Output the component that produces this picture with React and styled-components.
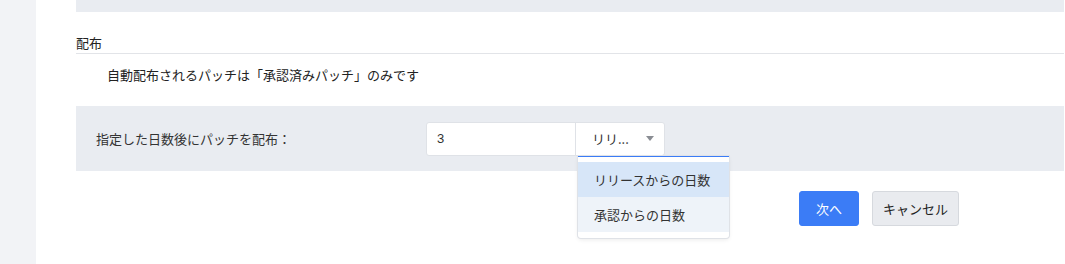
import React from 'react';
import styled, { createGlobalStyle } from 'styled-components';

const GlobalStyle = createGlobalStyle`
  html, body {
    margin: 0;
    padding: 0;
    background: #ffffff;
    font-family: "Noto Sans CJK JP", "Noto Sans", sans-serif;
    color: #333333;
  }
  * { box-sizing: border-box; }
`;

const Page = styled.div`
  display: flex;
  width: 1065px;
  height: 264px;
  overflow: hidden;
`;

const Sidebar = styled.div`
  width: 36px;
  flex-shrink: 0;
  background: #f2f3f6;
`;

const Main = styled.div`
  flex: 1;
  padding: 0 1px 0 40px;
`;

const TopBand = styled.div`
  height: 12px;
  background: #e9ecf1;
`;

const SectionTitle = styled.div`
  margin-top: 22px;
  height: 20px;
  line-height: 18px;
  font-size: 13px;
  color: #222;
  border-bottom: 1px solid #e2e4e8;
`;

const Note = styled.div`
  padding-left: 31px;
  height: 52px;
  line-height: 42px;
  font-size: 13px;
  color: #222;
`;

const FieldRow = styled.div`
  display: flex;
  align-items: center;
  height: 65px;
  background: #e9ecf1;
  padding-left: 20px;
`;

const Label = styled.div`
  width: 330px;
  font-size: 13px;
  color: #333;
`;

const Control = styled.div`
  position: relative;
  display: flex;
  height: 34px;
  background: #fff;
  border: 1px solid #dfe2e7;
  border-radius: 3px;
`;

const NumberInput = styled.div`
  width: 149px;
  padding-left: 10px;
  line-height: 32px;
  font-size: 13px;
  font-family: "Liberation Sans", Arial, sans-serif;
  border-right: 1px solid #dfe2e7;
`;

const Select = styled.div`
  width: 88px;
  display: flex;
  align-items: center;
  justify-content: space-between;
  padding: 0 10px 0 16px;
  font-size: 13px;
  color: #333;
`;

const Caret = styled.span`
  width: 0;
  height: 0;
  border-left: 4px solid transparent;
  border-right: 4px solid transparent;
  border-top: 5px solid #8a8d93;
`;

const Menu = styled.div`
  position: absolute;
  top: 33px;
  left: 151px;
  width: 151px;
  padding: 5px 0 6px;
  background: #fff;
  border-top: 1px solid #3b7cf6;
  border-radius: 0 0 3px 3px;
  box-shadow: 0 0 0 1px #dfe2e7, 0 2px 4px rgba(0, 0, 0, 0.08);
  z-index: 10;
`;

const Option = styled.div`
  height: 35px;
  line-height: 35px;
  padding-left: 16px;
  font-size: 13px;
  color: #333;
  background: ${(p) => (p.$active ? '#d7e6f8' : '#eef3f9')};
`;

const Actions = styled.div`
  display: flex;
  gap: 13px;
  padding: 20px 0 0 723px;
`;

const Button = styled.button`
  height: 35px;
  padding: 0 ${(p) => (p.$primary ? '16px' : '10px')};
  font-family: inherit;
  font-size: 13px;
  border-radius: 3px;
  border: 1px solid ${(p) => (p.$primary ? '#3b7cf6' : '#d6d9de')};
  background: ${(p) => (p.$primary ? '#3b7cf6' : '#e9ebef')};
  color: ${(p) => (p.$primary ? '#fff' : '#222')};
  cursor: pointer;
`;

const App = () => (
  <>
    <GlobalStyle />
    <Page>
      <Sidebar />
      <Main>
        <TopBand />
        <SectionTitle>配布</SectionTitle>
        <Note>自動配布されるパッチは「承認済みパッチ」のみです</Note>
        <FieldRow>
          <Label>指定した日数後にパッチを配布：</Label>
          <Control>
            <NumberInput>3</NumberInput>
            <Select>
              <span>リリ...</span>
              <Caret />
            </Select>
            <Menu>
              <Option $active>リリースからの日数</Option>
              <Option>承認からの日数</Option>
            </Menu>
          </Control>
        </FieldRow>
        <Actions>
          <Button $primary>次へ</Button>
          <Button>キャンセル</Button>
        </Actions>
      </Main>
    </Page>
  </>
);

export default App;
